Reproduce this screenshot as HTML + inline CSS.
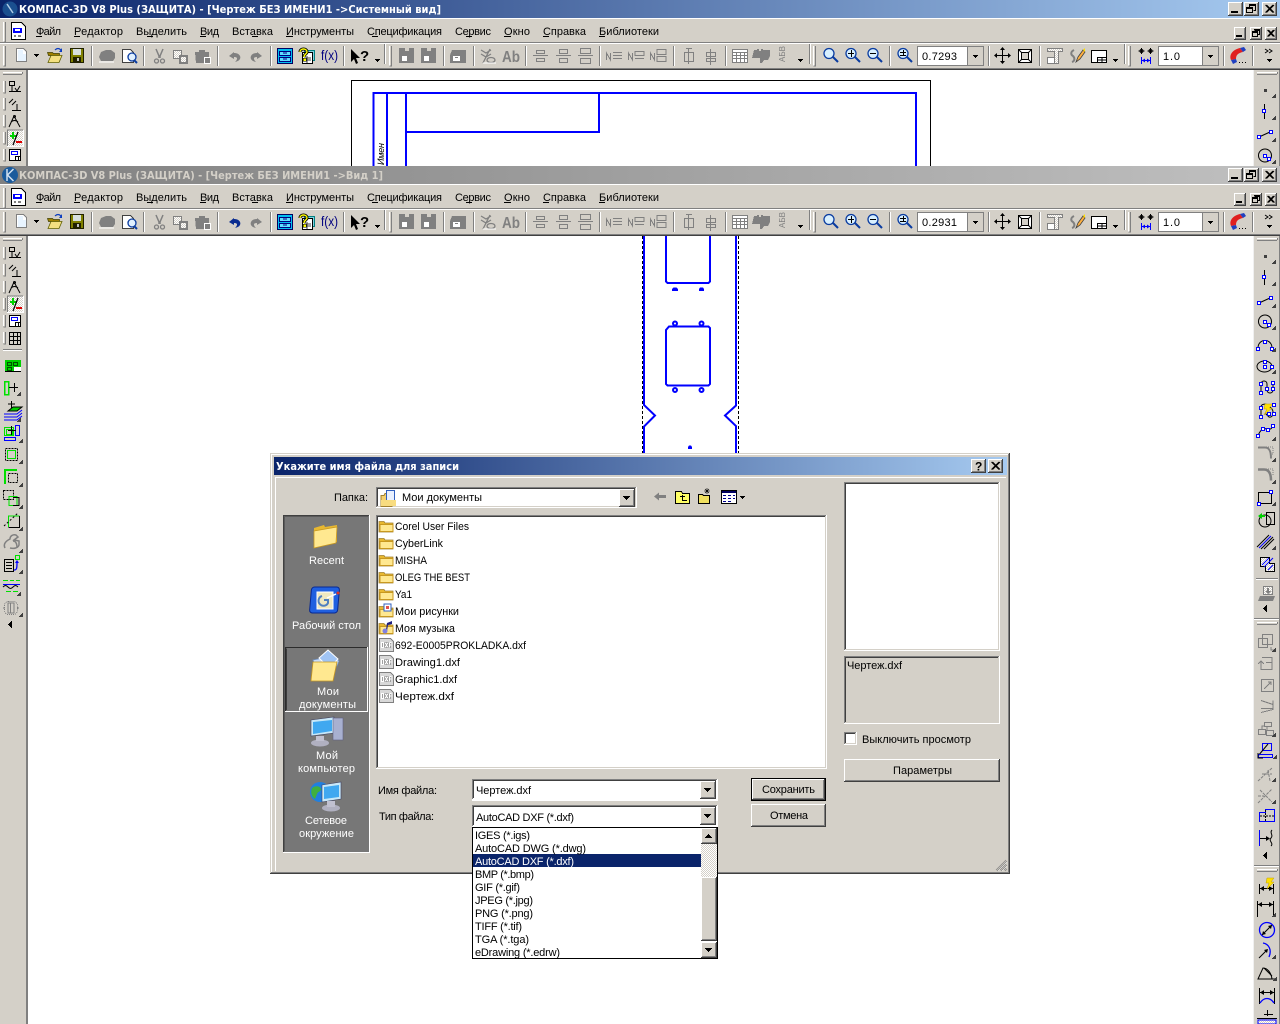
<!DOCTYPE html>
<html><head><meta charset="utf-8"><title>КОМПАС-3D V8 Plus</title>
<style>
html,body{margin:0;padding:0;background:#fff;overflow:hidden}
svg{display:block;position:absolute;left:0;top:0}
text{font-family:"Liberation Sans","DejaVu Sans",sans-serif;font-size:11px;fill:#000;white-space:pre}
.tt{font-family:"DejaVu Sans","Liberation Sans",sans-serif;font-size:11px;font-weight:bold;fill:#fff}
.w{fill:#fff}
.c{shape-rendering:crispEdges}
</style></head><body>
<svg width="1280" height="1024" viewBox="0 0 1280 1024" xmlns="http://www.w3.org/2000/svg">
<defs>
<linearGradient id="ga" x1="0" x2="1" y1="0" y2="0"><stop offset="0" stop-color="#0a246a"/><stop offset="1" stop-color="#a6caf0"/></linearGradient>
<linearGradient id="gi" x1="0" x2="1" y1="0" y2="0"><stop offset="0" stop-color="#808080"/><stop offset="1" stop-color="#c0c0c0"/></linearGradient>
<pattern id="dith" width="2" height="2" patternUnits="userSpaceOnUse"><rect width="2" height="2" fill="#fff"/><rect width="1" height="1" fill="#d4d0c8"/><rect x="1" y="1" width="1" height="1" fill="#d4d0c8"/></pattern>
<pattern id="dith2" width="2" height="2" patternUnits="userSpaceOnUse"><rect width="2" height="2" fill="#d4d0c8"/><rect width="1" height="1" fill="#fff"/><rect x="1" y="1" width="1" height="1" fill="#fff"/></pattern>

<g id="tbtn" class="c"><rect width="15" height="14" fill="#d4d0c8"/><path d="M.5 13V.5H14" fill="none" stroke="#fff"/><path d="M0 13.5H14.5V0" fill="none" stroke="#404040"/><path d="M1 12.5H13.5V1" fill="none" stroke="#808080"/></g>
<g id="tmin"><use href="#tbtn"/><rect class="c" x="3" y="9" width="7" height="2" fill="#000"/></g>
<g id="tres"><use href="#tbtn"/><path class="c" d="M5.5 3.5h6v5h-2M5 2.500h7M2.500 6.500h6v4h-6zM2 5.500h7M5.500 3v2" fill="none" stroke="#000"/></g>
<g id="tcls"><use href="#tbtn"/><path d="M3.500 3L11 10.500M4.500 3L12 10.500M11 3L3.500 10.500M12 3L4.500 10.500" stroke="#000" stroke-width="1"/></g>
<g id="sbtn" class="c"><rect width="12" height="13" fill="#d4d0c8"/><path d="M.5 12V.5H11" fill="none" stroke="#fff"/><path d="M0 12.500H11.500V0" fill="none" stroke="#404040"/><path d="M1 11.500H10.500V1" fill="none" stroke="#808080"/></g>
<g id="smin"><use href="#sbtn"/><rect class="c" x="2" y="8" width="6" height="2" fill="#000"/></g>
<g id="sres"><use href="#sbtn"/><path class="c" d="M4.500 3.500h5v4h-2M4 2.500h6M2.500 5.500h5v4h-5zM2 4.500h6" fill="none" stroke="#000"/></g>
<g id="scls"><use href="#sbtn"/><path d="M2.500 3L8.500 9.500M3.500 3L9.500 9.500M8.500 3L2.500 9.500M9.500 3L3.500 9.500" stroke="#000" stroke-width="1"/></g>
<g id="cbtn" class="c"><rect width="16" height="18" fill="#d4d0c8"/><path d="M.5 17V.5H15" fill="none" stroke="#fff"/><path d="M0 17.500H15.500V0" fill="none" stroke="#404040"/><path d="M1 16.500H14.500V1" fill="none" stroke="#808080"/><path d="M4 7h7v1H4zM5 8h5v1H5zM6 9h3v1H6zM7 10h1v1H7z" fill="#000"/></g>
<path id="darr" class="c" d="M0 0h5v1H0zM1 1h3v1H1zM2 2h1v1H2z" fill="#000"/>
<g id="grip" class="c"><path d="M.5 0v20" stroke="#fff"/><path d="M1.500 0v20" stroke="#d4d0c8"/><path d="M2.500 0v20h-2" fill="none" stroke="#808080"/></g>
<g id="mg" class="c"><path d="M.5 0v11" stroke="#fff"/><path d="M2.500 0v12h-2" fill="none" stroke="#808080"/></g>
<g id="sep" class="c"><path d="M.5 0v20" stroke="#808080"/><path d="M1.500 0v20" stroke="#fff"/></g>
<path id="tri" class="c" d="M3 0h1v4H0v-1h1v-1h1v-1h1z" fill="#404040"/>

<g id="mdoc"><path class="c" d="M11.500 22.500h10l4 4v13h-14z" fill="#fff" stroke="#000"/><rect class="c" x="13" y="28" width="9" height="5" fill="#0000ff"/><rect class="c" x="15" y="29" width="5" height="2" fill="#fff"/><path class="c" d="M14 36h2M18 36h3" stroke="#000"/></g>

<g id="tb1">
<path class="c" d="M16.500 48.500h7l3 3v10h-10z" fill="#fff" stroke="#808080"/><path class="c" d="M18 50h5v4h3v7h-8z" fill="#e8f4ff"/>
<use href="#darr" x="34" y="54"/>
<path d="M47.500 52.500h5l1 1h6v2h-11z" fill="#a08000" stroke="#404000" stroke-width=".7"/><path d="M48 62.500l3-7h11l-3 7z" fill="#f4e080" stroke="#606000" stroke-width=".8"/><path d="M55 50c2-2 4-2 6 0" fill="none" stroke="#0a3cc0" stroke-width="1.200"/><path d="M62 48v4h-3z" fill="#0a3cc0"/>
<rect class="c" x="70.500" y="48.500" width="13" height="14" fill="#808000" stroke="#202000"/><rect class="c" x="73" y="49" width="8" height="6" fill="#d8e0e0"/><rect class="c" x="73" y="57" width="8" height="5" fill="#202000"/><rect class="c" x="77" y="58" width="2" height="3" fill="#c0c0c0"/>
<path d="M101 61l-2-4 2-5 5-2h5l4 3v5l-2 3z" fill="#808080"/><path d="M99 62h15" stroke="#fff"/>
<path class="c" d="M122.500 49.500h8l3 3v10h-11z" fill="#fff" stroke="#404040"/><circle cx="132" cy="57" r="4" fill="#e0f0ff" stroke="#0a3ca0" stroke-width="1.300"/><path d="M134 60l3 3" stroke="#0a3ca0" stroke-width="2"/>
<path d="M156 49l3 7v2M163 49l-3 7v2" stroke="#808080" fill="none" stroke-width="1.500"/><circle cx="156.500" cy="61" r="2" fill="none" stroke="#808080" stroke-width="1.300"/><circle cx="162.500" cy="61" r="2" fill="none" stroke="#808080" stroke-width="1.300"/>
<rect class="c" x="173" y="50" width="9" height="9" fill="#808080"/><rect class="c" x="174" y="51" width="7" height="7" fill="url(#dith)"/><rect class="c" x="179" y="55" width="9" height="9" fill="#808080"/><rect class="c" x="181" y="57" width="5" height="5" fill="url(#dith)"/>
<path class="c" d="M195 52h4v-2h6v2h4v11h-13z" fill="#808080"/><rect class="c" x="204" y="57" width="7" height="7" fill="#fff"/><rect class="c" x="205" y="58" width="5" height="5" fill="#808080"/>
<path d="M255 52l-5 4 5 3v-2c3 0 4 1 2 4l-1 1c5-1 6-4 5-6-1-2-3-3-6-3z" fill="#808080" transform="translate(512 0) scale(-1 1)"/>
<rect class="c" x="277.500" y="48.500" width="15" height="15" fill="#00c0f0" stroke="#000060"/><rect class="c" x="279.500" y="51.500" width="11" height="4" fill="#60e0ff" stroke="#000080"/><rect class="c" x="279.500" y="57.500" width="11" height="4" fill="#60e0ff" stroke="#000080"/><path class="c" d="M283 53h4M283 59h4" stroke="#000080"/>
<rect class="c" x="304.500" y="50.500" width="10" height="10" fill="#80d0e0" stroke="#008080"/><rect class="c" x="302.500" y="52.500" width="10" height="11" fill="#fff" stroke="#000"/><path class="c" d="M304 58h7M304 60h7M307 56v7" stroke="#404040"/>
<path d="M300 52c0-4 7-4 7 0 0 2-3 2-3 5" fill="none" stroke="#000" stroke-width="3"/><path d="M300 52c0-4 7-4 7 0 0 2-3 2-3 5" fill="none" stroke="#ffff00" stroke-width="1.400"/><rect class="c" x="303" y="58" width="3" height="3" fill="#ffff00" stroke="#000" stroke-width=".5"/>
<path d="M351 49v13l3-3 2 5 2-1-2-5h4z" fill="#000"/>
<use href="#darr" x="375" y="59"/>
<use href="#grip" x="389" y="46"/>
<path class="c" d="M399 48h6v3h4v-3h5v15h-15z" fill="#808080"/><rect class="c" x="402" y="56" width="5" height="5" fill="#fff"/>
<path class="c" d="M421 48h6v3h4v-3h5v15h-15z" fill="#808080"/><rect class="c" x="424" y="56" width="5" height="5" fill="#fff"/>
<path class="c" d="M452 50h8l6 0v13h-16v-8z" fill="#808080"/><rect class="c" x="453" y="56" width="7" height="5" fill="#fff"/><rect class="c" x="455" y="57" width="3" height="1" fill="#808080"/>
<path d="M481 50l5 3 5-3M481 54l5 3 5-3M490 49l-7 14" fill="none" stroke="#808080" stroke-width="1.300"/><ellipse cx="491" cy="60" rx="4" ry="2.500" fill="none" stroke="#808080" stroke-width="1.300"/><path d="M483 63h13" stroke="#fff"/>
<g class="c" fill="none" stroke="#808080"><path d="M533 55.500h15M536.500 50.500h8v3h-8zM536.500 58.500h8v3h-8z"/><path d="M556 55.500h15M559.500 49.500h8v4h-8zM559.500 58.500h8v4h-8z"/><path d="M578 55.500h15M580.500 48.500h10v5h-10zM580.500 58.500h10v5h-10z"/>
<path d="M606.500 60v-7l4 7v-7M613 52.500h9M613 55.500h9M613 58.500h9"/><path d="M628.500 60v-7l4 7v-7M635 51.500h9v4h-9zM635 58.500h9"/><path d="M650.500 60v-7l4 7v-7M657 49.500h9v5h-9zM657 56.500h9v5h-9z"/>
<path d="M688.500 48v16M684.500 52.500h9v9h-9z M686 48.500h6"/><path d="M710.500 49v16M706.500 52.500h9v4h-9zM706.500 58.500h9v3h-9z"/>
<rect x="732.500" y="49.500" width="15" height="13" fill="#fff"/><path d="M733 52.500h14M733 55.500h14M733 58.500h14M736.500 53v9M740.500 53v9M744.500 53v9"/></g>
<path class="c" d="M754 50h3v-1h2v2h2v-2h2v1h7v6l-2 4h-4l-2 3h-2v-5h-8z" fill="#808080"/>
<text x="785" y="62" transform="rotate(-90 785 62)" style="font-size:8px;fill:#808080">АБВ</text>
<use href="#darr" x="798" y="59"/>
<use href="#grip" x="813" y="46"/>
<g fill="none"><circle cx="829" cy="53.500" r="5" fill="#d8f0ff" stroke="#0a3ca0" stroke-width="1.300"/><path d="M833 57l5 5" stroke="#0a3ca0" stroke-width="2"/>
<circle cx="851" cy="53.500" r="5" fill="#d8f0ff" stroke="#0a3ca0" stroke-width="1.300"/><path d="M855 57l5 5" stroke="#0a3ca0" stroke-width="2"/><path class="c" d="M848 53.500h6M851.500 50v7" stroke="#000"/>
<circle cx="873" cy="53.500" r="5" fill="#d8f0ff" stroke="#0a3ca0" stroke-width="1.300"/><path d="M877 57l5 5" stroke="#0a3ca0" stroke-width="2"/><path class="c" d="M870 53.500h6" stroke="#000"/>
<circle cx="903" cy="53.500" r="5" fill="#d8f0ff" stroke="#0a3ca0" stroke-width="1.300"/><path d="M907 57l5 5" stroke="#0a3ca0" stroke-width="2"/><path class="c" d="M900 52.500h6M903.500 50v5M900 55.500h6" stroke="#000"/></g>
<path class="c" d="M1002.500 48v15M995 55.500h15" stroke="#000"/><path d="M1002.500 47l-2.500 3h5zM1002.500 64l-2.500-3h5zM994 55.500l3-2.500v5zM1011 55.500l-3-2.500v5z" fill="#000"/>
<rect class="c" x="1018.500" y="49.500" width="13" height="13" fill="#fff" stroke="#000"/><rect class="c" x="1021.500" y="52.500" width="7" height="7" fill="#d4d0c8" stroke="#000"/><path d="M1019 50l3 3M1031 50l-3 3M1019 62l3-3M1031 62l-3-3" stroke="#000"/>
<path class="c" d="M1047.500 48.500h15v3h-4v12h-4v-12h-7z" fill="url(#dith)" stroke="#808080"/><rect class="c" x="1047.500" y="57.500" width="7" height="6" fill="#fff" stroke="#808080"/>
<path d="M1074 50c-4 2-3 5-1 6 2 2 2 5-1 6" fill="none" stroke="#808080" stroke-width="2"/><path d="M1076 62l2-5 5-7 2 2-5 7z" fill="#ffb040" stroke="#404040" stroke-width=".8"/><path d="M1083 50l2 2 0-4z" fill="#ffe000"/>
<rect class="c" x="1091.500" y="50.500" width="15" height="12" fill="#fff" stroke="#000"/><rect class="c" x="1097.500" y="57.500" width="9" height="5" fill="#fff" stroke="#000"/><path class="c" d="M1098 60h8M1102 58v4" stroke="#000"/>
<use href="#darr" x="1113" y="59"/>
<use href="#grip" x="1128" y="46"/>
<g fill="none"><circle cx="1141.500" cy="51" r="1.500" stroke="#000"/><circle cx="1150.500" cy="51" r="1.500" stroke="#000"/><path class="c" d="M1141.500 48v6M1138.500 51h6M1150.500 48v6M1147.500 51h6" stroke="#000" stroke-width=".6"/><path class="c" d="M1141.500 57v7M1150.500 57v7M1142 60.500h8" stroke="#0000ff"/></g><path d="M1142 60.500l3-2v4zM1150 60.500l-3-2v4z" fill="#0000ff"/>
<path d="M1231 60c-2-5 1-10 9-12l3 4c-5 1-7 3-7 7z" fill="#e02020"/><path d="M1231 60l5-1 1 3-4 2z" fill="#2040c0"/><path d="M1240 48l3 4 3-2-2-3z" fill="#2040c0"/>
<path class="c" d="M1239 62h1v1h-1zM1242 62h1v1h-1zM1245 62h1v1h-1z" fill="#000"/>
<path d="M1265 49l3 2-3 2M1269 49l3 2-3 2" fill="none" stroke="#000"/>
<use href="#darr" x="1267" y="59"/>
</g>

<g id="lp1" fill="none">
<g class="c"><path d="M3 72.500h19" stroke="#fff"/><path d="M3 74.500h19M22.500 72v2" stroke="#808080"/></g>
<use href="#mg" x="3" y="81"/><use href="#mg" x="3" y="98"/><use href="#mg" x="3" y="115"/><use href="#mg" x="3" y="132"/><use href="#mg" x="3" y="149"/>
<path class="c" d="M9.500 81.500h5v4h-5zM12 86v5M9 91.500h12" stroke="#000"/><path d="M15 88l2 3 3-5" stroke="#000"/>
<path d="M9 103l4-4M12 105l4-4M17 104v7M12 110.500h9" stroke="#000"/>
<path d="M9 127l5-11 6 11M11 122c2-2 5-2 7 0" stroke="#000"/><circle cx="14.500" cy="116.500" r="1" stroke="#000"/>
<rect class="c" x="7" y="130" width="16" height="17" fill="url(#dith)"/><path class="c" d="M7.500 147v-17H23" stroke="#808080"/><path class="c" d="M7 146.500h16.500V130" stroke="#fff"/>
<path class="c" d="M10 135.500h7M13.500 132v7M10 136.500h7M12.500 132v7" stroke="#00d000"/><path d="M18 132l-5 13" stroke="#000" stroke-width="1.200"/><path class="c" d="M16 141.500h6M16 142.500h6" stroke="#e00000"/>
<path class="c" d="M9.500 149.500h11v11h-11z" fill="#fff" stroke="#000"/><rect class="c" x="11.500" y="151.500" width="6" height="3" fill="#fff" stroke="#0000ff"/><path class="c" d="M15.500 156.500h5M15.500 156v4M18.500 156v4" stroke="#000"/>
</g>

<g id="rp1" fill="none">
<g class="c"><path d="M1257 72.500h20" stroke="#fff"/><path d="M1257 74.500h20M1277.500 72v2" stroke="#808080"/></g>
<rect class="c" x="1264" y="89" width="3" height="3" fill="#404040"/><use href="#tri" x="1272" y="94"/>
<path class="c" d="M1264.500 104v15" stroke="#000"/><rect class="c" x="1262.500" y="109.500" width="3" height="3" fill="#fff" stroke="#0000ff"/><use href="#tri" x="1272" y="116"/>
<path d="M1259 137l11-5" stroke="#000"/><rect class="c" x="1257.500" y="135.500" width="3" height="3" fill="#fff" stroke="#0000ff"/><rect class="c" x="1269.500" y="130.500" width="3" height="3" fill="#fff" stroke="#0000ff"/><use href="#tri" x="1272" y="138"/>
<circle cx="1265" cy="155.500" r="6.500" stroke="#000"/><rect class="c" x="1263.500" y="154.500" width="3" height="3" fill="#fff" stroke="#0000ff"/><rect class="c" x="1267.500" y="157.500" width="3" height="3" fill="#fff" stroke="#0000ff"/><use href="#tri" x="1272" y="160"/>
</g>
</defs>

<rect class="c" width="1280" height="1024" fill="#fff"/>

<!-- WINDOW 1 -->
<g class="c">
<rect x="0" y="0" width="1280" height="18" fill="url(#ga)"/>
<rect x="0" y="18" width="1280" height="1" fill="#fff"/>
<rect x="0" y="19" width="1280" height="51" fill="#d4d0c8"/>
<rect x="0" y="42" width="1280" height="1" fill="#808080"/><rect x="0" y="43" width="1280" height="1" fill="#fff"/>
<rect x="0" y="68" width="1280" height="1" fill="#808080"/><rect x="0" y="69" width="1280" height="1" fill="#404040"/>
<rect x="0" y="70" width="27" height="96" fill="#d4d0c8"/><rect x="26" y="70" width="2" height="96" fill="#808080"/>
<rect x="1253" y="70" width="1" height="96" fill="#f0f0f0"/><rect x="1254" y="70" width="26" height="96" fill="#d4d0c8"/><rect x="1279" y="70" width="1" height="96" fill="#808080"/>
</g>
<circle cx="10" cy="9" r="7.500" fill="#1a4f8f"/><path d="M7 4l6 9" stroke="#c0d8f0" stroke-width="1.500" opacity=".9" fill="none"/>
<text class="tt" x="19" y="13" textLength="422" lengthAdjust="spacingAndGlyphs">КОМПАС-3D V8 Plus (ЗАЩИТА) - [Чертеж БЕЗ ИМЕНИ1 -&gt;Системный вид]</text>
<use href="#tmin" x="1228" y="2"/><use href="#tres" x="1244" y="2"/><use href="#tcls" x="1262" y="2"/>
<use href="#grip" x="3" y="22"/><use href="#mdoc"/>
<text x="36" y="35" textLength="25">Файл</text><text x="74" y="35" textLength="49">Редактор</text><text x="136" y="35" textLength="51">Выделить</text><text x="200" y="35" textLength="19">Вид</text><text x="232" y="35" textLength="41">Вставка</text><text x="286" y="35" textLength="68">Инструменты</text><text x="367" y="35" textLength="75">Спецификация</text><text x="455" y="35" textLength="36">Сервис</text><text x="504" y="35" textLength="26">Окно</text><text x="543" y="35" textLength="43">Справка</text><text x="599" y="35" textLength="60">Библиотеки</text>
<path class="c" d="M36 36.500h6M74 36.500h6M147 36.500h6M200 36.500h6M252 36.500h6M286 36.500h7M372 36.500h6M466 36.500h6M504 36.500h7M543 36.500h6M599 36.500h6" stroke="#000"/>
<use href="#smin" x="1234" y="27"/><use href="#sres" x="1250" y="27"/><use href="#scls" x="1265" y="27"/>
<use href="#grip" x="3" y="46"/>
<g id="seps1"><use href="#sep" x="91" y="46"/><use href="#sep" x="143" y="46"/><use href="#sep" x="217" y="46"/><use href="#sep" x="270" y="46"/><use href="#sep" x="343" y="46"/><use href="#sep" x="384" y="44"/><use href="#sep" x="443" y="46"/><use href="#sep" x="473" y="46"/><use href="#sep" x="525" y="46"/><use href="#sep" x="599" y="46"/><use href="#sep" x="673" y="46"/><use href="#sep" x="725" y="46"/><use href="#sep" x="809" y="44"/><use href="#sep" x="889" y="46"/><use href="#sep" x="988" y="46"/><use href="#sep" x="1039" y="46"/><use href="#sep" x="1124" y="44"/><use href="#sep" x="1223" y="46"/><use href="#sep" x="1252" y="46"/></g>
<use href="#tb1"/>
<path d="M234 52l-5 4 5 3v-2c3 0 4 1 2 4l-1 1c5-1 6-4 5-6-1-2-3-3-6-3z" fill="#808080"/>
<text x="321" y="60" textLength="17" lengthAdjust="spacingAndGlyphs" style="font-size:14px;fill:#000080">f(x)</text>
<text x="360" y="61" style="font-size:15px;font-weight:bold">?</text>
<text x="502" y="62" textLength="18" lengthAdjust="spacingAndGlyphs" style="font-size:16px;font-weight:bold;fill:#808080">Ab</text>
<g class="c"><rect x="917" y="46" width="66" height="20" fill="#d4d0c8"/><path d="M917.500 66V46.500H983" fill="none" stroke="#808080"/><path d="M917 65.500h66.500V46" fill="none" stroke="#808080"/><rect x="918" y="47" width="50" height="18" fill="#fff"/><path d="M967.500 47v18" stroke="#808080"/><use href="#darr" x="973" y="55"/>
<rect x="1158" y="46" width="60" height="20" fill="#d4d0c8"/><path d="M1158.500 66V46.500H1218" fill="none" stroke="#808080"/><path d="M1158 65.500h60.500V46" fill="none" stroke="#808080"/><rect x="1159" y="47" width="44" height="18" fill="#fff"/><path d="M1202.500 47v18" stroke="#808080"/><use href="#darr" x="1208" y="55"/></g>
<text x="922" y="60" textLength="35">0.7293</text><text x="1163" y="60" textLength="17">1.0</text>
<g class="c" fill="none"><rect x="351.500" y="80.500" width="579" height="90" stroke="#000"/>
<path d="M373.500 170V93H916V170" stroke="#0000ff" stroke-width="2"/><path d="M387 93v77M406 93v77M406 132H599V93" stroke="#0000ff" stroke-width="2"/></g>
<text x="384" y="165" transform="rotate(-90 384 165)" textLength="22" style="font-size:9px;font-style:italic">Имен</text>
<use href="#lp1"/><use href="#rp1"/>

<!-- WINDOW 2 -->
<g class="c">
<rect x="0" y="166" width="1280" height="858" fill="#fff"/>
<rect x="0" y="166" width="1280" height="18" fill="url(#gi)"/>
<rect x="0" y="184" width="1280" height="1" fill="#fff"/>
<rect x="0" y="185" width="1280" height="51" fill="#d4d0c8"/>
<rect x="0" y="208" width="1280" height="1" fill="#808080"/><rect x="0" y="209" width="1280" height="1" fill="#fff"/>
<rect x="0" y="234" width="1280" height="1" fill="#808080"/><rect x="0" y="235" width="1280" height="1" fill="#404040"/>
<rect x="0" y="236" width="27" height="788" fill="#d4d0c8"/><rect x="26" y="236" width="2" height="788" fill="#808080"/>
<rect x="1253" y="236" width="1" height="788" fill="#f0f0f0"/><rect x="1254" y="236" width="26" height="788" fill="#d4d0c8"/><rect x="1279" y="236" width="1" height="788" fill="#808080"/>
</g>
<circle cx="10" cy="175" r="8" fill="#1a5a9c"/><path d="M7 169v12M7.500 175l6-6M7.500 175l6 6" stroke="#d0e0f0" stroke-width="1.500" fill="none"/>
<text class="tt" x="19" y="179" textLength="364" lengthAdjust="spacingAndGlyphs" style="fill:#d4d0c8">КОМПАС-3D V8 Plus (ЗАЩИТА) - [Чертеж БЕЗ ИМЕНИ1 -&gt;Вид 1]</text>
<use href="#tmin" x="1228" y="168"/><use href="#tres" x="1244" y="168"/><use href="#tcls" x="1262" y="168"/>
<g transform="translate(0 166)"><use href="#grip" x="3" y="22"/><use href="#mdoc"/>
<use href="#smin" x="1234" y="27"/><use href="#sres" x="1250" y="27"/><use href="#scls" x="1265" y="27"/>
<use href="#grip" x="3" y="46"/><use href="#seps1"/><use href="#tb1"/>
<path d="M234 52l-5 4 5 3v-2c3 0 4 1 2 4l-1 1c5-1 6-4 5-6-1-2-3-3-6-3z" fill="#0a2c90"/>
<g class="c"><rect x="917" y="46" width="66" height="20" fill="#d4d0c8"/><path d="M917.500 66V46.500H983" fill="none" stroke="#808080"/><path d="M917 65.500h66.500V46" fill="none" stroke="#808080"/><rect x="918" y="47" width="50" height="18" fill="#fff"/><path d="M967.500 47v18" stroke="#808080"/><use href="#darr" x="973" y="55"/>
<rect x="1158" y="46" width="60" height="20" fill="#d4d0c8"/><path d="M1158.500 66V46.500H1218" fill="none" stroke="#808080"/><path d="M1158 65.500h60.500V46" fill="none" stroke="#808080"/><rect x="1159" y="47" width="44" height="18" fill="#fff"/><path d="M1202.500 47v18" stroke="#808080"/><use href="#darr" x="1208" y="55"/></g>
<use href="#lp1"/><use href="#rp1"/>
</g>
<text x="36" y="201" textLength="25">Файл</text><text x="74" y="201" textLength="49">Редактор</text><text x="136" y="201" textLength="51">Выделить</text><text x="200" y="201" textLength="19">Вид</text><text x="232" y="201" textLength="41">Вставка</text><text x="286" y="201" textLength="68">Инструменты</text><text x="367" y="201" textLength="75">Спецификация</text><text x="455" y="201" textLength="36">Сервис</text><text x="504" y="201" textLength="26">Окно</text><text x="543" y="201" textLength="43">Справка</text><text x="599" y="201" textLength="60">Библиотеки</text>
<path class="c" d="M36 202.500h6M74 202.500h6M147 202.500h6M200 202.500h6M252 202.500h6M286 202.500h7M372 202.500h6M466 202.500h6M504 202.500h7M543 202.500h6M599 202.500h6" stroke="#000"/>
<text x="321" y="226" textLength="17" lengthAdjust="spacingAndGlyphs" style="font-size:14px;fill:#000080">f(x)</text>
<text x="360" y="227" style="font-size:15px;font-weight:bold">?</text>
<text x="502" y="228" textLength="18" lengthAdjust="spacingAndGlyphs" style="font-size:16px;font-weight:bold;fill:#808080">Ab</text>
<text x="922" y="226" textLength="35">0.2931</text><text x="1163" y="226" textLength="17">1.0</text>

<!-- left panel lower -->
<g fill="none">
<rect class="c" x="3" y="349" width="19" height="1" fill="#808080"/><rect class="c" x="3" y="350" width="19" height="1" fill="#fff"/>
<use href="#mg" x="3" y="332"/>
<path class="c" d="M9.500 332.500h11v12h-11zM9 336.500h12M9 340.500h12M13.500 333v11M17.500 333v11" stroke="#000"/>
<rect class="c" x="5" y="360" width="16" height="12" fill="#00d000"/><rect class="c" x="7.500" y="362.500" width="4" height="3" stroke="#005000"/><rect class="c" x="13.500" y="362.500" width="4" height="3" stroke="#005000"/><rect class="c" x="7.500" y="367.500" width="4" height="3" stroke="#005000"/><rect class="c" x="14" y="367" width="7" height="5" fill="#fff"/><rect class="c" x="5" y="371" width="16" height="1" fill="#000"/>
<rect class="c" x="4.500" y="381.500" width="4" height="13" stroke="#00e000" stroke-width="1.500"/><path class="c" d="M9 387.500h9M14.500 383v9" stroke="#000"/><use href="#tri" x="17" y="392"/>
<path d="M8 411l5-4h9l-5 4z" fill="#00d000" stroke="#000"/><path d="M4 414h13l5-4M4 417h13l5-4M4 420h13l5-4" stroke="#0000ff"/><path class="c" d="M8 404h7M11.500 401v7" stroke="#000"/><use href="#tri" x="17" y="418"/>
<rect class="c" x="4.500" y="427.500" width="9" height="8" stroke="#00e000"/><rect class="c" x="6.500" y="429.500" width="6" height="5" stroke="#00e000"/><rect class="c" x="15.500" y="425.500" width="4" height="10" stroke="#0000ff"/><rect class="c" x="4.500" y="437.500" width="11" height="3" stroke="#0000ff"/><path class="c" d="M8 430.500h8M11.500 426v9" stroke="#000"/><use href="#tri" x="19" y="439"/>
<rect class="c" x="5.500" y="448.500" width="12" height="12" stroke="#000" stroke-dasharray="2 1"/><rect class="c" x="7.500" y="450.500" width="8" height="8" stroke="#00e000"/><use href="#tri" x="19" y="460"/>
<path class="c" d="M5 484v-14h12" stroke="#00e000" stroke-width="2"/><rect class="c" x="8.500" y="473.500" width="9" height="9" stroke="#000" stroke-dasharray="2 1"/><use href="#tri" x="19" y="483"/>
<rect class="c" x="3.500" y="490.500" width="10" height="9" stroke="#000" stroke-dasharray="2 1"/><path class="c" d="M9 496.500h8v9H9z" stroke="#00e000"/><path class="c" d="M13 497.500h6v8h-6" stroke="#000"/><use href="#tri" x="19" y="505"/>
<path class="c" d="M8.500 527v-11h11" stroke="#00e000"/><path class="c" d="M19.500 516v11.500h-11" stroke="#000"/><path d="M4 526l14-13" stroke="#000" stroke-dasharray="2 2"/><use href="#tri" x="19" y="527"/>
<path d="M5 548c-2-4 1-7 5-9 0-3 3-5 6-4l2 2-4 3 5 1v4c-1 3-5 4-9 3" stroke="#808080" stroke-width="1.500"/><path d="M13 541c3 0 4 3 4 7" stroke="#808080" stroke-width="1.500"/><use href="#tri" x="19" y="549"/>
<rect class="c" x="4.500" y="559.500" width="9" height="12" stroke="#000"/><path class="c" d="M6 562.500h6M6 565.500h6M6 568.500h6" stroke="#000"/><rect class="c" x="15.500" y="555.500" width="4" height="4" stroke="#00e000"/><path d="M14 570c3 0 3-2 3-8" stroke="#0000ff" stroke-width="1.300"/><path d="M17 560l-2 3h4z" fill="#0000ff"/><use href="#tri" x="19" y="570"/>
<path class="c" d="M3 580.500h5M10 580.500h4M16 580.500h4" stroke="#00e000" stroke-width="1"/><path class="c" d="M3 584.500h17" stroke="#0000ff"/><path d="M3 587c2-2 3-2 5 0s3 2 5 0 3-2 5 0" stroke="#000"/><path class="c" d="M6 591.500h5M13 591.500h5" stroke="#00e000"/><use href="#tri" x="17" y="592"/>
<rect class="c" x="4.500" y="601.500" width="13" height="13" rx="4" stroke="#808080" stroke-dasharray="1 1"/><rect class="c" x="8" y="603" width="6" height="10" stroke="#808080"/><path class="c" d="M10.500 603v10M3 608h2M17 608h2" stroke="#808080"/><use href="#tri" x="19" y="613"/>
<path class="c" d="M11 621h1v7h-1zM10 622h1v5h-1zM9 623h1v3H9zM8 624h1v1H8z" fill="#000"/>
</g>

<!-- right panel lower -->
<g fill="none">
<path d="M1258 348c0-10 14-10 14 0" stroke="#000"/><rect class="c" x="1256.500" y="347.500" width="3" height="3" fill="#fff" stroke="#0000ff"/><rect class="c" x="1263.500" y="340.500" width="3" height="3" fill="#fff" stroke="#0000ff"/><rect class="c" x="1270.500" y="347.500" width="3" height="3" fill="#fff" stroke="#0000ff"/><use href="#tri" x="1272" y="348"/>
<ellipse cx="1264.500" cy="366.500" rx="7.500" ry="5.500" stroke="#000"/><rect class="c" x="1263.500" y="360.500" width="3" height="3" fill="#fff" stroke="#0000ff"/><rect class="c" x="1263.500" y="365.500" width="3" height="3" fill="#fff" stroke="#0000ff"/><rect class="c" x="1270.500" y="365.500" width="3" height="3" fill="#fff" stroke="#0000ff"/><use href="#tri" x="1272" y="370"/>
<path d="M1261 392v-8c0-4 6-4 6 0v6c0 4 6 4 6 0v-9" stroke="#000"/><rect class="c" x="1259.500" y="382.500" width="3" height="3" fill="#fff" stroke="#0000ff"/><rect class="c" x="1259.500" y="391.500" width="3" height="3" fill="#fff" stroke="#0000ff"/><rect class="c" x="1265.500" y="387.500" width="3" height="3" fill="#fff" stroke="#0000ff"/><rect class="c" x="1271.500" y="381.500" width="3" height="3" fill="#fff" stroke="#0000ff"/><rect class="c" x="1271.500" y="387.500" width="3" height="3" fill="#fff" stroke="#0000ff"/>
<path d="M1261 416v-9c0-3 5-4 8-1l3 3c2 3 1 9-3 8l-4-4" stroke="#000"/><path d="M1265 404h8l-4 4h3l-8 7 3-6h-3z" fill="#ffe000" stroke="#c0a000" stroke-width=".5"/><rect class="c" x="1259.500" y="406.500" width="3" height="3" fill="#fff" stroke="#0000ff"/><rect class="c" x="1259.500" y="415.500" width="3" height="3" fill="#fff" stroke="#0000ff"/><rect class="c" x="1272.500" y="403.500" width="3" height="3" fill="#fff" stroke="#0000ff"/><rect class="c" x="1267.500" y="412.500" width="3" height="3" fill="#fff" stroke="#0000ff"/><rect class="c" x="1272.500" y="412.500" width="3" height="3" fill="#fff" stroke="#0000ff"/>
<path d="M1258 436c2-6 5-8 9-7 3 1 5 0 6-4" stroke="#000"/><rect class="c" x="1256.500" y="434.500" width="3" height="3" fill="#fff" stroke="#0000ff"/><rect class="c" x="1261.500" y="427.500" width="3" height="3" fill="#fff" stroke="#0000ff"/><rect class="c" x="1266.500" y="428.500" width="3" height="3" fill="#fff" stroke="#0000ff"/><rect class="c" x="1271.500" y="424.500" width="3" height="3" fill="#fff" stroke="#0000ff"/><use href="#tri" x="1272" y="437"/>
<path d="M1258 447.500h7c4 0 6 3 6 11" stroke="#808080" stroke-width="2"/><path class="c" d="M1266 447h7v7h-1" stroke="#808080" stroke-dasharray="1 1"/><use href="#tri" x="1272" y="458"/>
<path d="M1258 469.500h6c5 0 7 4 7 11" stroke="#808080" stroke-width="2.500"/><path class="c" d="M1266 469h7v7" stroke="#808080" stroke-dasharray="1 1"/><use href="#tri" x="1272" y="480"/>
<rect class="c" x="1258.500" y="492.500" width="13" height="11" stroke="#000"/><rect class="c" x="1269.500" y="490.500" width="3" height="3" fill="#fff" stroke="#0000ff"/><rect class="c" x="1257.500" y="502.500" width="3" height="3" fill="#fff" stroke="#0000ff"/><use href="#tri" x="1272" y="502"/>
<circle cx="1265" cy="521" r="6" stroke="#000"/><rect class="c" x="1266.500" y="512.500" width="8" height="12" stroke="#000"/><path d="M1259 516h6" stroke="#00d000" stroke-width="2"/><path d="M1258 516l4-3v6z" fill="#00d000"/>
<path d="M1257 547l12-12M1261 549l12-12M1264 549l10-10" stroke="#000"/><path d="M1259 548l12-12" stroke="#0000ff"/><use href="#tri" x="1272" y="546"/>
<path class="c" d="M1260.500 557.500h9v6h5v8h-9v-5h-5z" fill="url(#dith)" stroke="#000"/><path d="M1262 565l7-7M1264 567l9-9M1268 570l5-5" stroke="#0000ff"/>
<rect class="c" x="1256" y="578" width="22" height="1" fill="#808080"/><rect class="c" x="1256" y="579" width="22" height="1" fill="#fff"/>
<rect class="c" x="1263.500" y="586.500" width="9" height="8" fill="url(#dith)" stroke="#808080"/><path d="M1260 596h15l-2 5h-15z" fill="#808080"/><path class="c" d="M1267 588h2v3h2l-3 3-3-3h2z" fill="#808080"/>
<path class="c" d="M1266 605h1v7h-1zM1265 606h1v5h-1zM1264 607h1v3h-1zM1263 608h1v1h-1z" fill="#000"/>
<rect class="c" x="1254" y="618" width="25" height="1" fill="#808080"/><rect class="c" x="1254" y="619" width="25" height="1" fill="#fff"/>
<path class="c" d="M1257 622.500h20" stroke="#fff"/><path class="c" d="M1257 624.500h20M1277.500 622v2" stroke="#808080"/>
<g stroke="#808080" class="c">
<rect x="1262.500" y="634.500" width="10" height="10"/><rect x="1258.500" y="638.500" width="9" height="9"/><path d="M1274 650h-3v-3"/>
<path d="M1262 657.500h10v12h-11v-9M1266 662.500h6v6"/><path d="M1258 664l3-3 3 3"/>
<rect x="1261.500" y="679.500" width="12" height="12"/><path d="M1264 689l7-7M1268 682h3v3"/>
<path d="M1261 700.500l12 4M1261 708.500h12M1261 712.500l12-3v-9"/>
<path d="M1258.500 729.500h7v5h-7zM1264.500 722.500h7v4h-7zM1266.500 730.500h7v5h-7zM1267 727v3M1262 729v-3h3"/>
</g><use href="#tri" x="1272" y="648"/><use href="#tri" x="1272" y="733"/>
<rect class="c" x="1262.500" y="743.500" width="9" height="7" fill="#d4d0c8" stroke="#0000ff"/><path d="M1258 756l10-12" stroke="#000"/><rect class="c" x="1258.500" y="754.500" width="14" height="3" stroke="#0000ff"/><path class="c" d="M1258 753v5h5" stroke="#000"/><use href="#tri" x="1273" y="755"/>
<path d="M1258 781l14-13M1262 774h10M1268 770l2 11" stroke="#808080" stroke-dasharray="3 1"/><use href="#tri" x="1272" y="778"/>
<path d="M1258 803l14-14M1260 790l12 12M1258 796h6" stroke="#808080" stroke-dasharray="3 1"/><use href="#tri" x="1272" y="800"/>
<path class="c" d="M1259.500 812.500h6v-3h9v12h-15z" stroke="#0000ff"/><path class="c" d="M1265.500 810v12M1260 816h14" stroke="#000" stroke-dasharray="2 1"/>
<path class="c" d="M1259.500 830v16" stroke="#0000ff"/><path class="c" d="M1260 838.500h9" stroke="#000"/><path d="M1270 838.500l-4-2.500v5z" fill="#000"/><path d="M1272 830c-3 3 2 5-1 8s3 5 0 8" stroke="#000"/>
<path class="c" d="M1266 852h1v7h-1zM1265 853h1v5h-1zM1264 854h1v3h-1zM1263 855h1v1h-1z" fill="#000"/>
<rect class="c" x="1254" y="865" width="25" height="1" fill="#808080"/><rect class="c" x="1254" y="866" width="25" height="1" fill="#fff"/>
<path class="c" d="M1257 869.500h20" stroke="#fff"/><path class="c" d="M1257 871.500h20M1277.500 869v2" stroke="#808080"/>
<path class="c" d="M1259.500 884v10M1273.500 884v10M1260 888.500h13" stroke="#000"/><path d="M1260 888.500l4-2.500v5zM1273 888.500l-4-2.500v5z" fill="#000"/><path d="M1267 878h7l-3 4h3l-7 7 2-6h-3z" fill="#ffe000" stroke="#c0a000" stroke-width=".5"/>
<path class="c" d="M1257.500 901v16M1273.500 901v14M1258 904.500h15" stroke="#000"/><path d="M1258 904.500l4-2.500v5zM1273 904.500l-4-2.500v5z" fill="#000"/><use href="#tri" x="1272" y="913"/>
<circle cx="1267" cy="930" r="7.500" stroke="#0000ff" stroke-width="1.300"/><path d="M1262 935l10-10" stroke="#000"/><path d="M1272 925l-4 1 3 3zM1262 935l4-1-3-3z" fill="#000"/>
<path d="M1263 943c6 1 9 7 6 14" stroke="#0000ff" stroke-width="1.300"/><path d="M1259 958l8-8" stroke="#000"/><path d="M1268 949l-4 1 3 3z" fill="#000"/><use href="#tri" x="1272" y="955"/>
<path d="M1258 979l5-11c4 0 8 4 9 11zM1259 979h16" stroke="#000"/><path d="M1264 968l8 8" stroke="#000"/><use href="#tri" x="1273" y="977"/>
<path class="c" d="M1259.500 988v16M1274.500 988v16M1260 992.500h14" stroke="#000"/><path d="M1260 992.500l4-2.500v5zM1274 992.500l-4-2.500v5z" fill="#000"/><path d="M1260 1003c4-6 10-6 14 0" stroke="#0000ff" stroke-width="1.300"/>
<path class="c" d="M1267.500 1010v6M1264 1014.500h9M1257 1018.500h20" stroke="#000"/><path class="c" d="M1258 1020h18v4h-18z" fill="url(#dith)" stroke="#0000ff"/>
</g>

<!-- drawing 2 -->
<g fill="none">
<path class="c" d="M642.500 236V453M738.500 236V453" stroke="#000" stroke-dasharray="3 2"/>
<path d="M644 236V405l11 10.500L644 426.500V453M736 236V405.500L725 415.500l11 10.500V453" stroke="#0000ff" stroke-width="2"/>
<path d="M666 236V281.500l1.500 1.500H708.500l1.500-1.500V236" stroke="#0000ff" stroke-width="2"/>
<path d="M669 326.500H708.500L710 328V384l-1.500 1.500H667.500L666 384V330z" stroke="#0000ff" stroke-width="2"/>
<circle cx="675" cy="323.500" r="2" stroke="#0000ff" stroke-width="2"/><circle cx="701.500" cy="323.500" r="2" stroke="#0000ff" stroke-width="2"/>
<circle cx="675" cy="390" r="2" stroke="#0000ff" stroke-width="2"/><circle cx="701.500" cy="390" r="2" stroke="#0000ff" stroke-width="2"/>
<path d="M672 291v-2l1.500-1.500h3l1.500 1.500v2zM699 291v-2l1-1.500h3l1 1.500v2zM688 449v-2l1-1.500h2l1 1.500v2z" fill="#0000ff"/>
</g>

<!-- DIALOG -->
<g class="c">
<rect x="270" y="453" width="740" height="421" fill="#d4d0c8"/>
<path d="M270.500 873V453.500H1009" fill="none" stroke="#d4d0c8"/>
<path d="M271.500 873V454.500H1008" fill="none" stroke="#fff"/>
<path d="M270 873.500H1009.500V453" fill="none" stroke="#404040"/>
<path d="M271 872.500H1008.500V454" fill="none" stroke="#808080"/>
<rect x="274" y="457" width="733" height="18" fill="url(#ga)"/>
<path d="M275.500 871V477.500H1006" fill="none" stroke="#fff"/>
</g>
<text class="tt" x="276" y="470" textLength="183" lengthAdjust="spacingAndGlyphs">Укажите имя файла для записи</text>
<g transform="translate(971 459)"><use href="#tbtn"/><text x="4" y="11.500" style="font-weight:bold;font-size:12px">?</text></g>
<use href="#tcls" x="988" y="459"/>
<text x="334" y="501" textLength="34">Папка:</text>
<g class="c"><rect x="376" y="487" width="261" height="21" fill="#fff"/><path d="M376.500 507V487.500H636" fill="none" stroke="#808080"/><path d="M377.500 506V488.500H635" fill="none" stroke="#404040"/><path d="M376 507.500H636.500V487" fill="none" stroke="#fff"/><path d="M377 506.500H635.500V488" fill="none" stroke="#d4d0c8"/></g>
<use href="#cbtn" x="619" y="489"/>
<path d="M381 495.500h3l1-2h7v13h-11z" fill="#f4d070" stroke="#a08030"/><rect class="c" x="386.500" y="490.500" width="8" height="10" fill="#e8f0ff" stroke="#3060c0"/><path class="c" d="M381 500h15v6h-15z" fill="#f8dc80"/>
<text x="402" y="501" textLength="80">Мои документы</text>
<path d="M654 496.500l5-4v2.500h7v3h-7v2.500z" fill="#808080"/>
<path class="c" d="M675.500 491.500h6l1 2h7v10h-14z" fill="#ffff66" stroke="#000"/><path class="c" d="M682.500 500v-5M680 496.500h5M682 500.500h5" stroke="#000"/>
<path class="c" d="M698.500 494.500h4l1 1h6v8h-11z" fill="#f0e060" stroke="#000"/><path d="M707 488v6M704 491h6M705 489l4 4M709 489l-4 4" stroke="#000" stroke-width=".6"/>
<rect class="c" x="721.500" y="490.500" width="15" height="13" fill="#fff" stroke="#000"/><rect class="c" x="722" y="491" width="14" height="2" fill="#000060"/><path class="c" d="M723 495.500h3M728 495.500h3M733 495.500h2M723 498.500h3M728 498.500h3M733 498.500h2M723 501.500h3M728 501.500h3" stroke="#000090"/>
<use href="#darr" x="740" y="496"/>

<g class="c"><rect x="283" y="515" width="87" height="338" fill="#777"/><path d="M283.500 852V515.500H369" fill="none" stroke="#404040"/><path d="M284.500 851V516.500H368" fill="none" stroke="#5a5a5a"/><path d="M283 852.500H369.500V515" fill="none" stroke="#fff"/>
<path d="M285.500 711V647.500H367" fill="none" stroke="#2c2c2c"/><path d="M286.500 710V648.500" fill="none" stroke="#3c3c3c"/><path d="M285 711.500H367.500V647" fill="none" stroke="#fff"/></g>
<g>
<path d="M314 528l10-3 1 2 12-2v17l-23 5z" fill="#e8b830"/><path d="M314 531l23-4-1 16-22 5z" fill="#ffe890" stroke="#c89820" stroke-width=".8"/>
<rect x="311" y="587" width="28" height="26" rx="3" fill="#2060e0" stroke="#082890" transform="skewX(-5) translate(52 0)"/><rect x="317" y="592" width="16" height="17" fill="#f0e8c0" stroke="#fff"/><path d="M322 596a5 5 0 1 0 6 7v-3h-4" fill="none" stroke="#5080c0" stroke-width="2"/><path d="M327 598l9-4" stroke="#fff" stroke-width="1.500"/><circle cx="338" cy="593" r="1.500" fill="#e03020"/>
<path d="M313 660l10-2 5-7 11 10-2 5H315z" fill="#c8dcf8" stroke="#7090c0" stroke-width=".8"/><path d="M319 658l9-8 10 9-9 9z" fill="#a0c4f4" stroke="#fff"/><path d="M313 662l24 0-4 19-22 0z" fill="#ffe890" stroke="#c89820" stroke-width=".8"/>
<path d="M311 720l23-3v16l-23 3z" fill="#c8e8f8" stroke="#404060" stroke-width=".6"/><path d="M313 722l19-2v11l-19 3z" fill="#40a8f0"/><rect x="333" y="718" width="10" height="22" fill="#a8b0d0" stroke="#606080" stroke-width=".6"/><ellipse cx="320" cy="743" rx="9" ry="3.500" fill="#b0b0c0"/><path d="M316 736h8v5h-8z" fill="#c0c0d0"/>
<circle cx="320" cy="792" r="10" fill="#2080e0"/><path d="M312 788c4-3 8-2 9 1 0 3-3 2-4 5l-2 5c-3-2-5-6-3-11z" fill="#40b040"/><path d="M322 785l19-3v17l-19 3z" fill="#c8e8f8" stroke="#404060" stroke-width=".6"/><path d="M324 787l15-2v12l-15 2z" fill="#40a8f0"/><ellipse cx="331" cy="808" rx="9" ry="3.500" fill="#b0b0c0"/><path d="M327 801h8v6h-8z" fill="#c0c0d0"/>
</g>
<text class="w" x="309" y="564" textLength="35">Recent</text>
<text class="w" x="292" y="629" textLength="69">Рабочий стол</text>
<text class="w" x="317" y="695" textLength="22">Мои</text>
<text class="w" x="299" y="708" textLength="57">документы</text>
<text class="w" x="316" y="759" textLength="22">Мой</text>
<text class="w" x="298" y="772" textLength="57">компьютер</text>
<text class="w" x="305" y="824" textLength="42">Сетевое</text>
<text class="w" x="299" y="837" textLength="55">окружение</text>

<g class="c"><rect x="376" y="515" width="451" height="254" fill="#fff"/><path d="M376.500 768V515.500H826" fill="none" stroke="#808080"/><path d="M377.500 767V516.500H825" fill="none" stroke="#404040"/><path d="M376 768.500H826.500V515" fill="none" stroke="#fff"/><path d="M377 767.500H825.500V516" fill="none" stroke="#d4d0c8"/></g>
<defs>
<g id="fold"><path d="M0 2.500h5l1 1.500h8v9H0z" fill="#e8b830" stroke="#a08030" stroke-width=".8"/><path class="c" d="M1 5.500h13v7H1z" fill="#ffe890" stroke="#c89820"/></g>
<g id="dxf"><path class="c" d="M.5 .5h11l3 3v10H.5z" fill="#d8d8d8" stroke="#808080"/><rect class="c" x="2" y="4" width="10" height="6" fill="#a0a0a0"/><path class="c" d="M2.500 4.500v5h2v-5zM6 4.500l3 5M9 4.500l-3 5M10.500 4.500v5M10.500 4.500h2M10.500 7h2" stroke="#fff" fill="none"/></g>
</defs>
<use href="#fold" x="379" y="519"/><use href="#fold" x="379" y="536"/><use href="#fold" x="379" y="553"/><use href="#fold" x="379" y="570"/><use href="#fold" x="379" y="587"/><use href="#fold" x="379" y="604"/><use href="#fold" x="379" y="621"/>
<rect class="c" x="384" y="604" width="7" height="7" fill="#fff" stroke="#3060c0"/><rect class="c" x="386" y="606" width="3" height="3" fill="#e05050"/>
<path d="M386 630l1-7 5-2v3l-4 1-1 6z" fill="#202080"/><circle cx="385" cy="631" r="2.500" fill="#8080e0"/>
<use href="#dxf" x="379" y="638"/><use href="#dxf" x="379" y="655"/><use href="#dxf" x="379" y="672"/><use href="#dxf" x="379" y="689"/>
<text x="395" y="530" textLength="74" lengthAdjust="spacingAndGlyphs">Corel User Files</text>
<text x="395" y="547" textLength="48" lengthAdjust="spacingAndGlyphs">CyberLink</text>
<text x="395" y="564" textLength="32" lengthAdjust="spacingAndGlyphs">MISHA</text>
<text x="395" y="581" textLength="75" lengthAdjust="spacingAndGlyphs">OLEG THE BEST</text>
<text x="395" y="598" textLength="17" lengthAdjust="spacingAndGlyphs">Ya1</text>
<text x="395" y="615" textLength="64" lengthAdjust="spacingAndGlyphs">Мои рисунки</text>
<text x="395" y="632" textLength="60" lengthAdjust="spacingAndGlyphs">Моя музыка</text>
<text x="395" y="649" textLength="131" lengthAdjust="spacingAndGlyphs">692-E0005PROKLADKA.dxf</text>
<text x="395" y="666" textLength="65" lengthAdjust="spacingAndGlyphs">Drawing1.dxf</text>
<text x="395" y="683" textLength="62" lengthAdjust="spacingAndGlyphs">Graphic1.dxf</text>
<text x="395" y="700" textLength="59" lengthAdjust="spacingAndGlyphs">Чертеж.dxf</text>

<text x="378" y="794" textLength="59">Имя файла:</text>
<text x="379" y="820" textLength="55">Тип файла:</text>
<g class="c">
<rect x="472" y="779" width="246" height="21" fill="#fff"/><path d="M472.500 799V779.500H717" fill="none" stroke="#808080"/><path d="M473.500 798V780.500H716" fill="none" stroke="#404040"/><path d="M472 800.500H717.500V779" fill="none" stroke="#fff"/>
<rect x="472" y="805" width="246" height="22" fill="#fff"/><path d="M472.500 826V805.500H717" fill="none" stroke="#808080"/><path d="M473.500 825V806.500H716" fill="none" stroke="#404040"/>
</g>
<use href="#cbtn" x="700" y="781"/><use href="#cbtn" x="700" y="807"/>
<text x="476" y="794" textLength="55">Чертеж.dxf</text>
<text x="476" y="821" textLength="98">AutoCAD DXF (*.dxf)</text>

<g class="c">
<rect x="751" y="778" width="75" height="23" fill="#000"/><rect x="752" y="779" width="73" height="21" fill="#d4d0c8"/><path d="M752.500 799V779.500H824" fill="none" stroke="#fff"/><path d="M753 798.500H823.500V780" fill="none" stroke="#808080"/><path d="M752 799.500H824.500V779" fill="none" stroke="#404040"/>
<rect x="751" y="804" width="75" height="23" fill="#d4d0c8"/><path d="M751.500 826V804.500H825" fill="none" stroke="#fff"/><path d="M751 826.500H825.500V804" fill="none" stroke="#404040"/><path d="M752 825.500H824.500V805" fill="none" stroke="#808080"/>
<rect x="844" y="759" width="156" height="23" fill="#d4d0c8"/><path d="M844.500 781V759.500H999" fill="none" stroke="#fff"/><path d="M844 781.500H999.500V759" fill="none" stroke="#404040"/><path d="M845 780.500H998.500V760" fill="none" stroke="#808080"/>
</g>
<text x="762" y="793" textLength="53">Сохранить</text>
<text x="770" y="819" textLength="38">Отмена</text>
<text x="893" y="774" textLength="59">Параметры</text>

<g class="c">
<rect x="844" y="482" width="156" height="169" fill="#fff"/><path d="M844.500 650V482.500H999" fill="none" stroke="#808080"/><path d="M845.500 649V483.500H998" fill="none" stroke="#404040"/><path d="M844 650.500H999.500V482" fill="none" stroke="#fff"/><path d="M845 649.500H998.500V483" fill="none" stroke="#d4d0c8"/>
<path d="M844.500 723V656.500H999" fill="none" stroke="#808080"/><path d="M845.500 722V657.500H998" fill="none" stroke="#404040"/><path d="M844 723.500H999.500V656" fill="none" stroke="#fff"/>
<rect x="844" y="732" width="13" height="13" fill="#fff"/><path d="M844.500 744V732.500H856" fill="none" stroke="#808080"/><path d="M845.500 743V733.500H855" fill="none" stroke="#404040"/><path d="M844 744.500H856.500V732" fill="none" stroke="#fff"/><path d="M845 743.500H855.500V733" fill="none" stroke="#d4d0c8"/>
</g>
<text x="847" y="669" textLength="55">Чертеж.dxf</text>
<text x="862" y="743" textLength="109">Выключить просмотр</text>
<path d="M1006 860l-10 10M1007 861l-10 10M1006 864l-6 6M1007 865l-6 6M1006 868l-2 2M1007 869l-2 2" stroke="#808080" stroke-width=".7"/><path d="M1007 862l-9 9M1007 866l-5 5" stroke="#fff" stroke-width=".5"/>

<g class="c">
<rect x="472" y="827" width="246" height="132" fill="#fff"/><rect x="472.500" y="827.500" width="245" height="131" fill="none" stroke="#000"/>
<rect x="473" y="854" width="228" height="13" fill="#0a246a"/>
<rect x="701" y="844" width="16" height="33" fill="url(#dith)"/>
<g transform="translate(701 828)"><rect width="16" height="16" fill="#d4d0c8"/><path d="M.5 15V.5H15" fill="none" stroke="#fff"/><path d="M0 15.500H15.500V0" fill="none" stroke="#404040"/><path d="M1 14.500H14.500V1" fill="none" stroke="#808080"/><path d="M7 6h1v1H7zM6 7h3v1H6zM5 8h5v1H5zM4 9h7v1H4z" fill="#000"/></g>
<g transform="translate(701 877)"><rect width="16" height="64" fill="#d4d0c8"/><path d="M.5 63V.5H15" fill="none" stroke="#fff"/><path d="M0 63.500H15.500V0" fill="none" stroke="#404040"/><path d="M1 62.500H14.500V1" fill="none" stroke="#808080"/></g>
<g transform="translate(701 942)"><rect width="16" height="16" fill="#d4d0c8"/><path d="M.5 15V.5H15" fill="none" stroke="#fff"/><path d="M0 15.500H15.500V0" fill="none" stroke="#404040"/><path d="M1 14.500H14.500V1" fill="none" stroke="#808080"/><path d="M4 6h7v1H4zM5 7h5v1H5zM6 8h3v1H6zM7 9h1v1H7z" fill="#000"/></g>
</g>
<text x="475" y="839" textLength="55">IGES (*.igs)</text>
<text x="475" y="852" textLength="111">AutoCAD DWG (*.dwg)</text>
<text class="w" x="475" y="865" textLength="99">AutoCAD DXF (*.dxf)</text>
<text x="475" y="878" textLength="59">BMP (*.bmp)</text>
<text x="475" y="891" textLength="45">GIF (*.gif)</text>
<text x="475" y="904" textLength="58">JPEG (*.jpg)</text>
<text x="475" y="917" textLength="58">PNG (*.png)</text>
<text x="475" y="930" textLength="47">TIFF (*.tif)</text>
<text x="475" y="943" textLength="54">TGA (*.tga)</text>
<text x="475" y="956" textLength="85">eDrawing (*.edrw)</text>
</svg>
</body></html>
